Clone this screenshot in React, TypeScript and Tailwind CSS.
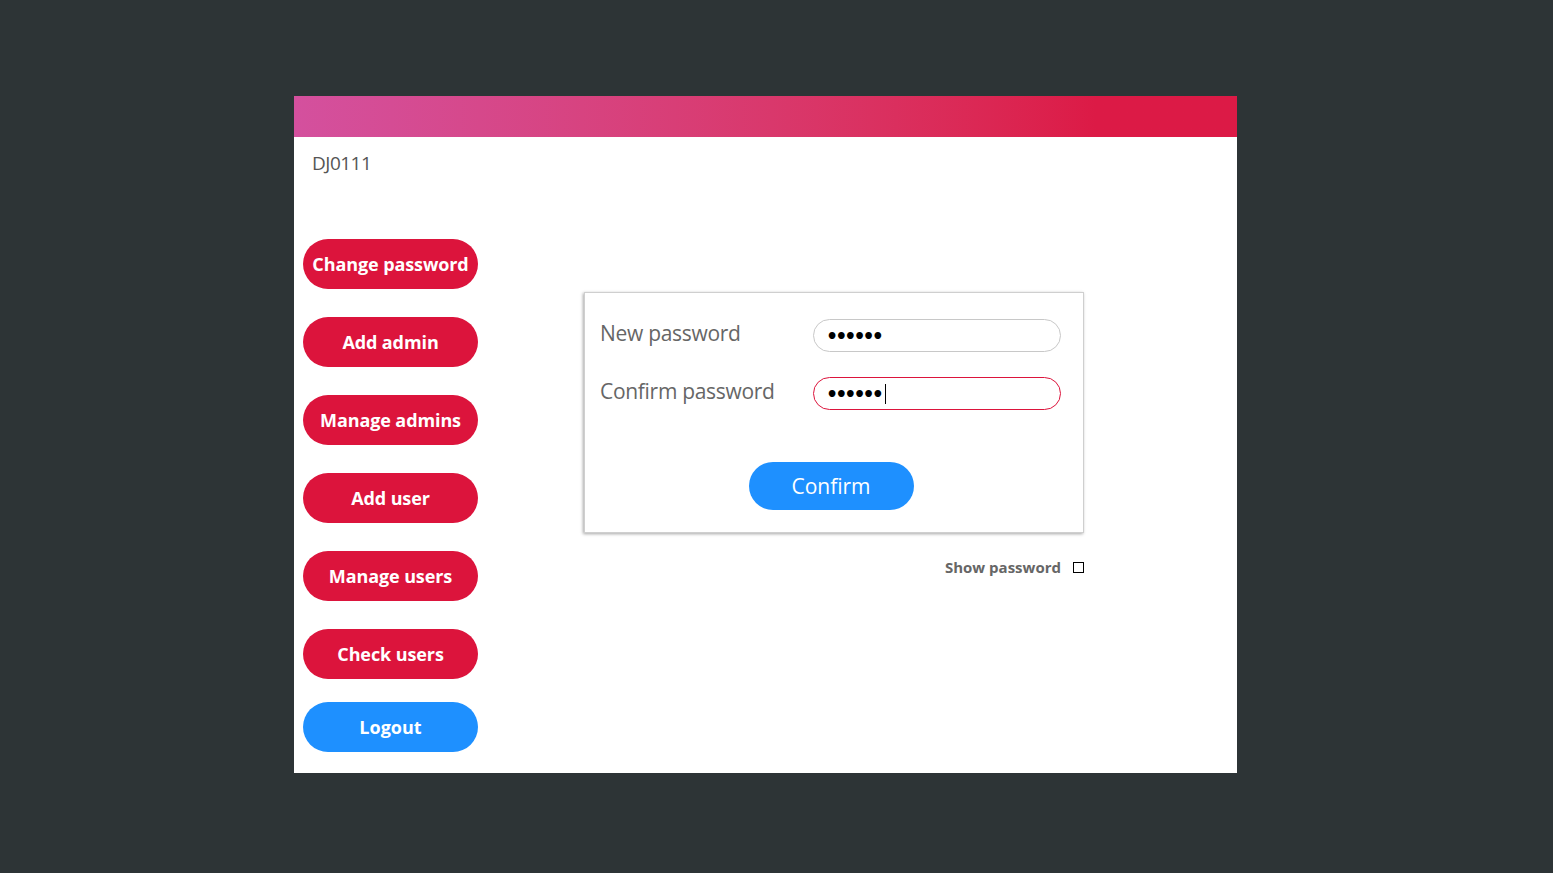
import React from 'react';

const menu = ['Change password', 'Add admin', 'Manage admins', 'Add user', 'Manage users', 'Check users'];

function FakeInput({ active }: { active?: boolean }) {
  return (
    <div
      className={`w-[248px] h-[33px] rounded-full bg-white flex items-center pl-[12px] border ${
        active ? 'border-[#dc143c]' : 'border-[#c8c8c8]'
      }`}
    >
      <span className="text-black text-[19px] leading-none tracking-[-3px] font-bold translate-y-[1px] font-['DejaVu_Sans',sans-serif]">
        ••••••
      </span>
      {active && <span className="w-px h-[20px] bg-black ml-[4px]" />}
    </div>
  );
}

export default function App() {
  return (
    <div className="min-h-[873px] w-full bg-[#2d3436] pl-[294px] pt-[96px] font-['Open_Sans','Noto_Sans',sans-serif]">
      <div className="w-[943px] h-[677px] bg-white flex flex-col">
        <div className="h-[41px] bg-gradient-to-r from-[#d4509e] to-[#dc1a46] to-85%" />
        <div className="px-[18px] pt-[13px] text-[19px] text-[#555] leading-[26px] tracking-[-0.5px]">DJ0111</div>

        <div className="flex flex-1">
          <div className="flex flex-col pl-[9px] pt-[63px] w-[290px]">
            {menu.map((m) => (
              <button
                key={m}
                className="w-[175px] h-[50px] mb-[28px] rounded-full bg-[#dc143c] text-white font-bold text-[18px] tracking-[-0.1px]"
              >
                {m}
              </button>
            ))}
            <button className="w-[175px] h-[50px] -mt-[5px] rounded-full bg-[#1e90ff] text-white font-bold text-[18px]">
              Logout
            </button>
          </div>

          <div className="flex flex-col pt-[116px]">
            <div className="w-[500px] h-[241px] border border-[#cfcfcf] shadow-[-1px_1px_3px_rgba(0,0,0,0.35)] flex flex-col pl-[15px] pt-[26px]">
              <div className="flex items-center h-[33px]">
                <span className="w-[213px] text-[21px] text-[#666] tracking-[-0.3px] -translate-y-[2px]">New password</span>
                <FakeInput />
              </div>
              <div className="flex items-center h-[33px] mt-[25px]">
                <span className="w-[213px] text-[21px] text-[#666] tracking-[-0.3px] -translate-y-[2px]">Confirm password</span>
                <FakeInput active />
              </div>
              <div className="flex justify-center pr-[21px] mt-[52px]">
                <button className="w-[165px] h-[48px] rounded-full bg-[#1e90ff] text-white text-[21px] pt-px">Confirm</button>
              </div>
            </div>
            <div className="flex justify-end items-center mt-[23px] gap-[12px]">
              <span className="text-[15px] font-bold text-[#666]">Show password</span>
              <span className="w-[11px] h-[11px] border border-black bg-white" />
            </div>
          </div>
        </div>
      </div>
    </div>
  );
}
